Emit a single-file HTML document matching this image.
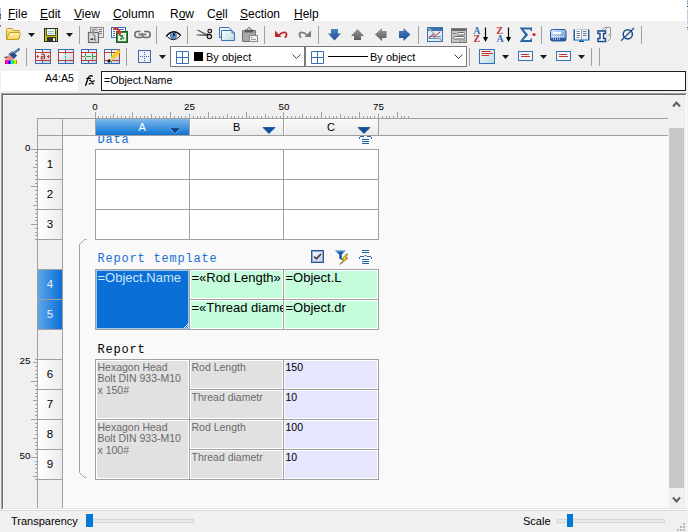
<!DOCTYPE html>
<html><head><meta charset="utf-8"><style>
*{margin:0;padding:0;box-sizing:border-box}
html,body{width:688px;height:532px;overflow:hidden;background:#f0f0f0;font-family:"Liberation Sans",sans-serif;color:#000}
.t{position:absolute;white-space:nowrap;line-height:1}
.ic{position:absolute;overflow:visible}
svg{display:block}
.u{text-decoration:underline;text-underline-offset:2px}
</style></head><body>
<div style="position:absolute;left:0px;top:0px;width:688px;height:21px;background:#fff"></div>
<div class="t" style="left:8px;top:8px;font-size:12px;"><span style="text-decoration:underline;text-underline-offset:1px;text-decoration-thickness:1px">F</span>ile</div>
<div class="t" style="left:40px;top:8px;font-size:12px;"><span style="text-decoration:underline;text-underline-offset:1px;text-decoration-thickness:1px">E</span>dit</div>
<div class="t" style="left:74px;top:8px;font-size:12px;"><span style="text-decoration:underline;text-underline-offset:1px;text-decoration-thickness:1px">V</span>iew</div>
<div class="t" style="left:113px;top:8px;font-size:12px;"><span style="text-decoration:underline;text-underline-offset:1px;text-decoration-thickness:1px">C</span>olumn</div>
<div class="t" style="left:170px;top:8px;font-size:12px;">R<span style="text-decoration:underline;text-underline-offset:1px;text-decoration-thickness:1px">o</span>w</div>
<div class="t" style="left:207px;top:8px;font-size:12px;">C<span style="text-decoration:underline;text-underline-offset:1px;text-decoration-thickness:1px">e</span>ll</div>
<div class="t" style="left:240px;top:8px;font-size:12px;"><span style="text-decoration:underline;text-underline-offset:1px;text-decoration-thickness:1px">S</span>ection</div>
<div class="t" style="left:294px;top:8px;font-size:12px;"><span style="text-decoration:underline;text-underline-offset:1px;text-decoration-thickness:1px">H</span>elp</div>
<svg width="0" height="0" style="position:absolute"><defs>
<linearGradient id="gFold" x1="0" y1="0" x2="0" y2="1"><stop offset="0" stop-color="#fff8c0"/><stop offset="1" stop-color="#f5cf50"/></linearGradient>
<linearGradient id="gPage" x1="0" y1="0" x2="1" y2="1"><stop offset="0" stop-color="#ffffff"/><stop offset="1" stop-color="#b8d8e0"/></linearGradient>
<linearGradient id="gBlue" x1="0" y1="0" x2="0" y2="1"><stop offset="0" stop-color="#4f80c0"/><stop offset="1" stop-color="#1c4c90"/></linearGradient>
<linearGradient id="gGray" x1="0" y1="0" x2="0" y2="1"><stop offset="0" stop-color="#9a9a9a"/><stop offset="1" stop-color="#5a5a5a"/></linearGradient>
<linearGradient id="gCalc" x1="0" y1="0" x2="1" y2="1"><stop offset="0" stop-color="#d8f0ff"/><stop offset="1" stop-color="#5a8ac8"/></linearGradient>
<linearGradient id="gRain" x1="0" y1="0" x2="1" y2="0"><stop offset="0" stop-color="#ff0000"/><stop offset=".2" stop-color="#ff00ff"/><stop offset=".4" stop-color="#0000ff"/><stop offset=".55" stop-color="#00ffff"/><stop offset=".7" stop-color="#00ff00"/><stop offset=".85" stop-color="#ffff00"/><stop offset="1" stop-color="#ff3000"/></linearGradient>
</defs></svg>
<svg class="ic" style="left:5px;top:27px" width="17" height="14" viewBox="0 0 17 14"><path d="M1.5 11.5V2.5Q1.5 1.5 2.5 1.5H7L8.5 3.5H13.5Q14.5 3.5 14.5 4.5V11.5Z" fill="#f6da70" stroke="#c49a28"/><path d="M2 3H7" stroke="#fff4c0"/><path d="M1.5 12.5H13.5L15.5 6.5Q15.8 5.5 14.5 5.5H5Q4.2 5.5 4 6.5L1.5 12.5Z" fill="url(#gFold)" stroke="#c39a2a"/></svg>
<svg class="ic" style="left:28px;top:33px" width="7" height="4" viewBox="0 0 7 4"><path d="M0 0H7L3.5 4Z" fill="#1a1a1a"/></svg>
<svg class="ic" style="left:44px;top:28px" width="14" height="14" viewBox="0 0 14 14"><rect x="0.5" y="0.5" width="13" height="13" fill="#c4c400" stroke="#2a2a2a"/><rect x="3" y="1" width="8" height="6" fill="#eef6f8"/><path d="M2.5 1V7.5H11.5V1" fill="none" stroke="#3a3a3a" stroke-width="0.8"/><path d="M4 3.5H10M4 5.5H10" stroke="#a0c4cc"/><rect x="3" y="9" width="9" height="4.5" fill="#333"/><rect x="9" y="10" width="2" height="3" fill="#dff0f8"/><rect x="12" y="1" width="1" height="1" fill="#fff"/></svg>
<svg class="ic" style="left:66px;top:33px" width="7" height="4" viewBox="0 0 7 4"><path d="M0 0H7L3.5 4Z" fill="#1a1a1a"/></svg>
<div style="position:absolute;left:79px;top:26px;width:1px;height:18px;background:#a0a0a0"></div>
<svg class="ic" style="left:88px;top:27px" width="17" height="16" viewBox="0 0 17 16"><rect x="2.5" y="0.5" width="13" height="10" fill="#e6e6e6" stroke="#8a8a8a"/><path d="M11 2.5H14M11 4.5H14M11 6.5H14M4 2.5H6" stroke="#7a7a7a"/><rect x="0.5" y="5.5" width="10" height="10" fill="#dcdcdc" stroke="#6a6a6a" stroke-width="1.2"/><path d="M9.5 3Q6 1.5 5 4Q4 6.5 6.5 8.5Q8 10 5.5 12" fill="none" stroke="#9a9a9a" stroke-width="1.8"/><path d="M2.5 12.5L5 12M6.5 13L7.5 12.5" stroke="#2a2a2a" stroke-width="1.6"/></svg>
<svg class="ic" style="left:111px;top:27px" width="17" height="16" viewBox="0 0 17 16"><rect x="0.5" y="0.5" width="14" height="10" fill="#fff" stroke="#3a6ab8"/><path d="M2 2.5H13M2 4.5H4M2 6.5H4M2 8.5H4" stroke="#3a6ab8"/><rect x="5.5" y="4.5" width="11" height="11" fill="#3a8a3a" stroke="#1f5f1f"/><rect x="7" y="6" width="8" height="8" fill="#e8f4e4"/><path d="M8.5 7.5L13 12M9 12H11M12 8L10.5 9.5" stroke="#2a7a2a" stroke-width="1.5"/><path d="M2.5 2Q6 0 8.5 4.5" fill="none" stroke="#d03838" stroke-width="2.2"/><path d="M5.5 4.5L8.5 9L11.5 4Z" fill="#d03838"/></svg>
<svg class="ic" style="left:134px;top:30px" width="17" height="9" viewBox="0 0 17 9"><path d="M6.5 1.5H3.5Q0.8 1.5 0.8 4.5Q0.8 7.5 3.5 7.5H6.5Q8.5 7.5 9 6M10 1.5H13.5Q16.2 1.5 16.2 4.5Q16.2 7.5 13.5 7.5H10.5Q8.5 7.5 8 3" fill="none" stroke="#6a6a6a" stroke-width="1.6"/><path d="M4.5 4.5H12.5" stroke="#7a7a7a" stroke-width="2"/></svg>
<div style="position:absolute;left:156px;top:26px;width:1px;height:18px;background:#a0a0a0"></div>
<svg class="ic" style="left:166px;top:30px" width="16" height="11" viewBox="0 0 16 11"><clipPath id="eyeClip"><path d="M0.2 6.4Q7.5 -2.3 14.7 5.4Q7.5 13.1 0.2 6.4Z"/></clipPath><path d="M0.2 6.4Q7.5 -2.3 14.7 5.4Q7.5 13.1 0.2 6.4Z" fill="#fff"/><g clip-path="url(#eyeClip)"><circle cx="7.4" cy="5.4" r="3.6" fill="#5a8acc"/><circle cx="7.6" cy="4.6" r="1.3" fill="#111"/><circle cx="6.3" cy="4.1" r="0.7" fill="#fff"/></g><path d="M0.2 6.4Q7.5 -2.3 14.7 5.4" fill="none" stroke="#111" stroke-width="1.5"/><path d="M1.5 6.8Q7.5 13.1 14.2 5.8" fill="none" stroke="#111" stroke-width="1"/></svg>
<div style="position:absolute;left:187px;top:26px;width:1px;height:18px;background:#a0a0a0"></div>
<svg class="ic" style="left:196px;top:28px" width="17" height="12" viewBox="0 0 17 12"><path d="M1.5 2L11 6.8" stroke="#555" stroke-width="1.3"/><path d="M0 6.6L11 6.2L11 8L1 7.4Z" fill="#555"/><path d="M11.5 5.5Q11.5 7.5 13 8" fill="none" stroke="#111" stroke-width="1.3"/><circle cx="13.8" cy="3.1" r="1.9" fill="#c8c8c8" stroke="#111" stroke-width="1.1"/><circle cx="13.4" cy="8.6" r="2.2" fill="#c8c8c8" stroke="#111" stroke-width="1.1"/></svg>
<svg class="ic" style="left:218px;top:27px" width="18" height="15" viewBox="0 0 18 15"><path d="M1.5 0.5H11L13 2.5V10.5H1.5Z" fill="url(#gPage)" stroke="#3a70b8"/><path d="M3.5 3.5H14L16.5 6V13.5H3.5Z" fill="url(#gPage)" stroke="#3a70b8"/><path d="M14 3.5V6H16.5" fill="none" stroke="#3a70b8"/></svg>
<svg class="ic" style="left:242px;top:27px" width="17" height="16" viewBox="0 0 17 16"><rect x="0.5" y="3.5" width="13" height="11" rx="0.5" fill="#a8a8a8" stroke="#707070"/><path d="M3 2.5H11L11.5 5.5H2.5Z" fill="#5a5a5a"/><path d="M5.5 2.5Q5.5 0.5 7 0.5Q8.5 0.5 8.5 2.5" fill="#eee" stroke="#707070"/><rect x="7.5" y="8.5" width="8" height="6" fill="#f2f2f2" stroke="#8a8a8a"/><path d="M9 10.5H11M9 12.5H14" stroke="#9a9a9a"/></svg>
<div style="position:absolute;left:264px;top:26px;width:1px;height:18px;background:#a0a0a0"></div>
<svg class="ic" style="left:275px;top:30px" width="13" height="9" viewBox="0 0 13 9"><path d="M3.5 5.5Q7 1.5 10.5 2.5Q12.8 4 10 7.8" fill="none" stroke="#c0282c" stroke-width="1.8"/><path d="M0 0.5V7H6.5Z" fill="#c0282c"/></svg>
<svg class="ic" style="left:298px;top:30px" width="13" height="9" viewBox="0 0 13 9"><path d="M9.5 5.5Q6 1.5 2.5 2.5Q0.2 4 3 7.8" fill="none" stroke="#7a7a7a" stroke-width="1.8"/><path d="M13 0.5V7H6.5Z" fill="#7a7a7a"/></svg>
<div style="position:absolute;left:318px;top:26px;width:1px;height:18px;background:#a0a0a0"></div>
<svg class="ic" style="left:328px;top:29px" width="13" height="12" viewBox="0 0 13 12"><path d="M3 0H10V4.5H13L6.5 11.5L0 4.5H3Z" fill="url(#gBlue)"/></svg>
<svg class="ic" style="left:351px;top:29px" width="13" height="12" viewBox="0 0 13 12"><path d="M6.5 0L13 7H10V11H3V7H0Z" fill="url(#gGray)"/></svg>
<svg class="ic" style="left:375px;top:28px" width="12" height="13" viewBox="0 0 12 13"><path d="M0 6.5L7 0V3H11.5V10H7V13Z" fill="url(#gGray)"/></svg>
<svg class="ic" style="left:399px;top:28px" width="12" height="13" viewBox="0 0 12 13"><path d="M11.5 6.5L4.5 0V3H0V10H4.5V13Z" fill="url(#gBlue)"/></svg>
<div style="position:absolute;left:418px;top:26px;width:1px;height:18px;background:#a0a0a0"></div>
<svg class="ic" style="left:427px;top:27px" width="16" height="15" viewBox="0 0 16 15"><rect x="0.5" y="0.5" width="15" height="14" fill="#dff0f8" stroke="#3a70b0"/><rect x="1" y="1" width="14" height="3" fill="#3a70b0"/><rect x="3" y="2" width="1" height="1" fill="#fff"/><path d="M2 11.5H14M2 9.5H14" stroke="#3a70b0" stroke-width="0.8"/><path d="M2 11L6.5 6.5L7.5 10L13.5 4.5" fill="none" stroke="#d03030" stroke-width="1.2" stroke-dasharray="1.5 0.5"/><path d="M1 1L15 14" stroke="#b0b0b0" stroke-width="1.2"/></svg>
<svg class="ic" style="left:451px;top:28px" width="16" height="16" viewBox="0 0 16 16"><rect x="0.5" y="0.5" width="15" height="14" fill="#c8c8c8" stroke="#7a7a7a"/><rect x="1" y="1" width="14" height="2" fill="#6a6a6a"/><rect x="6.5" y="4.5" width="7" height="2.5" rx="1" fill="#f8f8f8" stroke="#6a6a6a"/><rect x="2.5" y="8.5" width="11" height="2.5" rx="1" fill="#f8f8f8" stroke="#6a6a6a"/><path d="M2 5.5H5" stroke="#7a7a7a"/><path d="M8 13H10M11.5 13H14" stroke="#8a8a8a"/></svg>
<svg class="ic" style="left:473px;top:27px" width="16" height="16" viewBox="0 0 16 16"><text x="0.2" y="7" font-family="Liberation Serif" font-weight="bold" font-size="10" fill="#3a70b8">A</text><text x="0.5" y="15" font-family="Liberation Serif" font-weight="bold" font-size="10" fill="#c03030">Z</text><path d="M12.5 0.5V13" stroke="#000" stroke-width="1.2"/><path d="M10 10H15L12.5 15Z" fill="#000"/></svg>
<svg class="ic" style="left:496px;top:27px" width="16" height="16" viewBox="0 0 16 16"><text x="0.2" y="7" font-family="Liberation Serif" font-weight="bold" font-size="10" fill="#c03030">Z</text><text x="0.5" y="15" font-family="Liberation Serif" font-weight="bold" font-size="10" fill="#3a70b8">A</text><path d="M12.5 0.5V13" stroke="#000" stroke-width="1.2"/><path d="M10 10H15L12.5 15Z" fill="#000"/></svg>
<svg class="ic" style="left:519px;top:27px" width="17" height="16" viewBox="0 0 17 16"><path d="M0.5 0.5H13V4H11.5V2.5H4.5L9.2 7.8L4.5 13H11.5V11.5H13V15H0.5L6 7.8Z" fill="#2a66a8"/><circle cx="15" cy="7.5" r="1.6" fill="#d02828"/></svg>
<div style="position:absolute;left:541px;top:26px;width:1px;height:18px;background:#a0a0a0"></div>
<svg class="ic" style="left:550px;top:29px" width="17" height="13" viewBox="0 0 17 13"><rect x="0.5" y="0.5" width="15.5" height="11.5" rx="2" fill="url(#gCalc)" stroke="#2a5aa0"/><rect x="0.8" y="9" width="15" height="3" fill="#2a5aa0"/><rect x="3" y="3" width="8" height="2" fill="#fff"/><path d="M3 7.5H14M3 10H10" stroke="#fff" stroke-dasharray="1 1"/></svg>
<svg class="ic" style="left:573px;top:28px" width="17" height="15" viewBox="0 0 17 15"><path d="M0.5 1.5H7.5L8.5 2.5L9.5 1.5H16.5V12.5H0.5Z" fill="#2a5aa0"/><path d="M2 1.5H7.5Q8 2 8.3 3V11.5H2Z" fill="#fff"/><path d="M10 1.5H15V11.5H8.7V3Q9 2 10 1.5Z" fill="#e6f4f8"/><path d="M3.5 3.5H6.5M3.5 5.5H7M3.5 7.5H7M3.5 9.5H6.5M10 3.5H13.5M10 5.5H13.5M10 7.5H13.5" stroke="#7a7a7a"/><rect x="6" y="12" width="5" height="2" fill="#1a4a90"/><path d="M2 12.5H15" stroke="#4ab0f0" stroke-dasharray="1 1"/></svg>
<svg class="ic" style="left:597px;top:27px" width="14" height="16" viewBox="0 0 14 16"><path d="M4.5 3.5L7.5 0.5H13.5V11.5L10.5 14.5" fill="none" stroke="#9a9a9a"/><path d="M7.5 3.5L10.5 0.5M13.5 6.5L10.5 9.5" stroke="#9a9a9a"/><path d="M1 4H8.5V6.5H6.5V11.5H8.5V14.5H1V11.5H3V6.5H1Z" fill="#fff" stroke="#1a4a8a" stroke-width="1.5"/></svg>
<svg class="ic" style="left:620px;top:27px" width="15" height="15" viewBox="0 0 15 15"><circle cx="7.8" cy="7.3" r="4.6" fill="none" stroke="#1a4a8a" stroke-width="1.5"/><path d="M1 13.8L14 1" stroke="#1a4a8a" stroke-width="1.2"/></svg>
<div style="position:absolute;left:641px;top:26px;width:1px;height:18px;background:#a0a0a0"></div>
<svg class="ic" style="left:4px;top:48px" width="17" height="17" viewBox="0 0 17 17"><rect x="1" y="12" width="12" height="4" fill="url(#gRain)"/><path d="M0.5 9.5L3.5 8.5L5 7L10 10.5L9 12.5L3 12.5Z" fill="#f08888"/><path d="M0.5 9.5L3.5 8.8" stroke="#333" stroke-width="1"/><path d="M4.5 6L8.5 3L13 7.5L10 11Z" fill="#2a4e82"/><path d="M6 5.5L9 3.8" stroke="#7ab0e8" stroke-width="1.2"/><path d="M10.5 4.5L15.5 0.8" stroke="#4a6a90" stroke-width="2.4"/><path d="M11 3L14 1" stroke="#a8c8e8" stroke-width="0.8"/></svg>
<div style="position:absolute;left:26px;top:48px;width:1px;height:18px;background:#a0a0a0"></div>
<svg class="ic" style="left:35px;top:49px" width="16" height="15" viewBox="0 0 16 15"><rect x="0.5" y="0.5" width="15" height="14" fill="url(#gPage)" stroke="#3a6ab8"/><path d="M7.5 0.5V3.5M7.5 11.5V14.5" stroke="#3a6ab8"/><rect x="0.5" y="3.5" width="15" height="8" fill="none" stroke="#c83434"/><path d="M1.5 7.5H4M12 7.5H14.5M2.5 6V9M13.5 6V9" stroke="#c83434"/><path d="M6.2 5.5Q8.5 4.5 9.5 6V10M9.5 7.5Q6 7 6.2 9Q6.5 10.5 9.5 9.5" fill="none" stroke="#c83434" stroke-width="1.3"/></svg>
<svg class="ic" style="left:58px;top:49px" width="16" height="15" viewBox="0 0 16 15"><rect x="0.5" y="0.5" width="15" height="14" fill="url(#gPage)" stroke="#3a6ab8"/><path d="M7.5 0.5V3.5M7.5 11.5V14.5" stroke="#3a6ab8"/><rect x="0.5" y="3.5" width="15" height="8" fill="none" stroke="#c83434"/><path d="M7.5 4V11" stroke="#4a9a4a" stroke-dasharray="2 1"/></svg>
<svg class="ic" style="left:81px;top:49px" width="16" height="15" viewBox="0 0 16 15"><rect x="0.5" y="0.5" width="15" height="14" fill="url(#gPage)" stroke="#3a6ab8"/><path d="M7.5 0.5V3.5M7.5 11.5V14.5" stroke="#3a6ab8"/><rect x="0.5" y="3.5" width="15" height="8" fill="none" stroke="#c83434"/><path d="M1 7.5H4M5 7.5H10M11 7.5H15" stroke="#4a9a4a"/><path d="M4.5 4V7M4.5 8V11M11.5 4V7M11.5 8V11" stroke="#4a9a4a"/></svg>
<svg class="ic" style="left:104px;top:49px" width="16" height="15" viewBox="0 0 16 15"><rect x="0.5" y="0.5" width="15" height="14" fill="url(#gPage)" stroke="#3a6ab8"/><path d="M7.5 0.5V3.5M7.5 11.5V14.5" stroke="#3a6ab8"/><rect x="0.5" y="3.5" width="15" height="8" fill="none" stroke="#c83434"/><path d="M7.5 3.5V14" stroke="#4a9a4a"/><path d="M8 9.5L15.5 1.5" stroke="#f8c818" stroke-width="3.8"/><path d="M6 11.5L8.5 9" stroke="#f0c8a8" stroke-width="3"/><path d="M4 13L6 11" stroke="#111" stroke-width="2.6"/></svg>
<div style="position:absolute;left:126px;top:48px;width:1px;height:18px;background:#a0a0a0"></div>
<svg class="ic" style="left:138px;top:50px" width="13" height="13" viewBox="0 0 13 13"><rect x="0.5" y="0.5" width="12" height="12" fill="none" stroke="#3a6ab8"/><g fill="#3a6ab8"><rect x="6" y="2" width="1" height="1"/><rect x="6" y="4" width="1" height="1"/><rect x="6" y="6" width="1" height="1"/><rect x="6" y="8" width="1" height="1"/><rect x="6" y="10" width="1" height="1"/><rect x="2" y="6" width="1" height="1"/><rect x="4" y="6" width="1" height="1"/><rect x="8" y="6" width="1" height="1"/><rect x="10" y="6" width="1" height="1"/></g></svg>
<svg class="ic" style="left:159px;top:55px" width="7" height="4" viewBox="0 0 7 4"><path d="M0 0H7L3.5 4Z" fill="#1a1a1a"/></svg>
<div style="position:absolute;left:469px;top:48px;width:1px;height:18px;background:#a0a0a0"></div>
<svg class="ic" style="left:479px;top:49px" width="17" height="16" viewBox="0 0 17 16"><rect x="0.5" y="0.5" width="15" height="14" fill="url(#gPage)" stroke="#3a70b8"/><path d="M2.5 2.5H11.5M2.5 4.5H14M2.5 6.5H10" stroke="#d03030"/></svg>
<svg class="ic" style="left:502px;top:55px" width="7" height="4" viewBox="0 0 7 4"><path d="M0 0H7L3.5 4Z" fill="#1a1a1a"/></svg>
<svg class="ic" style="left:518px;top:51px" width="15" height="10" viewBox="0 0 15 10"><rect x="0.5" y="0.5" width="14" height="9" fill="#eef6fa" stroke="#3a70b8"/><path d="M3 3.5H11M3 5.5H12" stroke="#d03030"/></svg>
<svg class="ic" style="left:540px;top:55px" width="7" height="4" viewBox="0 0 7 4"><path d="M0 0H7L3.5 4Z" fill="#1a1a1a"/></svg>
<svg class="ic" style="left:556px;top:51px" width="15" height="10" viewBox="0 0 15 10"><rect x="0.5" y="0.5" width="14" height="9" fill="#eef6fa" stroke="#3a70b8"/><path d="M3 3.5H11M3 5.5H12" stroke="#d03030"/></svg>
<svg class="ic" style="left:578px;top:55px" width="7" height="4" viewBox="0 0 7 4"><path d="M0 0H7L3.5 4Z" fill="#1a1a1a"/></svg>
<div style="position:absolute;left:591px;top:48px;width:1px;height:18px;background:#a0a0a0"></div>
<div style="position:absolute;left:599px;top:48px;width:1px;height:18px;background:#a0a0a0"></div>
<div style="position:absolute;left:170px;top:46px;width:135px;height:21px;background:#fff;border:1px solid #7a7a7a"></div>
<div style="position:absolute;left:305px;top:46px;width:162px;height:21px;background:#fff;border:1px solid #7a7a7a"></div>
<svg class="ic" style="left:176px;top:51px" width="13" height="13"><path d="M0.5 0.5H12.5V12.5H0.5ZM6.5 0.5V12.5M0.5 6.5H12.5" fill="none" stroke="#3a70b8"/></svg>
<svg class="ic" style="left:311px;top:51px" width="13" height="13"><path d="M0.5 0.5H12.5V12.5H0.5ZM6.5 0.5V12.5M0.5 6.5H12.5" fill="none" stroke="#3a70b8"/></svg>
<div style="position:absolute;left:194px;top:52px;width:9px;height:9px;background:#000"></div>
<div class="t" style="left:206px;top:52px;font-size:11px">By object</div>
<div style="position:absolute;left:328px;top:56px;width:40px;height:1px;background:#000"></div>
<div class="t" style="left:370px;top:52px;font-size:11px">By object</div>
<svg class="ic" style="left:292px;top:54px" width="9" height="6"><path d="M0.5 0.5L4.5 4.5L8.5 0.5" fill="none" stroke="#404040"/></svg>
<svg class="ic" style="left:454px;top:54px" width="9" height="6"><path d="M0.5 0.5L4.5 4.5L8.5 0.5" fill="none" stroke="#404040"/></svg>
<div style="position:absolute;left:1px;top:71px;width:77px;height:20px;background:#fff"></div>
<div class="t" style="left:45px;top:73px;font-size:10.6px">A4:A5</div>
<svg class="ic" style="left:84px;top:74px" width="13" height="13"><path d="M1.5 11.8Q3.3 6.5 4.2 4Q5.2 1.6 7 1.7Q8 1.8 8.6 2.6" fill="none" stroke="#000" stroke-width="1.3"/><path d="M2.2 4.4H7" stroke="#000" stroke-width="1.2"/><path d="M5.3 6.6Q6.5 5.8 7.2 7.2L8.4 9.3Q9 10.2 9.8 9.6M10.6 6.5L5.6 9.8M4.8 9.8H6.2" fill="none" stroke="#000" stroke-width="1.2"/></svg>
<div style="position:absolute;left:101px;top:71px;width:585px;height:20px;background:#fff;border:1px solid #1e1e1e"></div>
<div class="t" style="left:104px;top:75px;font-size:10.67px">=Object.Name</div>
<div style="position:absolute;left:1px;top:93px;width:686px;height:417px;background:#f0f0f0;border-top:1px solid #a0a0a0;border-left:1px solid #a0a0a0;border-right:1px solid #fff;border-bottom:1px solid #fff"></div>
<div style="position:absolute;left:2px;top:94px;width:684px;height:415px;border-top:1px solid #696969;border-left:1px solid #696969;border-right:1px solid #e3e3e3;border-bottom:1px solid #e3e3e3"></div>
<div style="position:absolute;left:3px;top:95px;width:682px;height:413px;border-top:1px solid #f8f8f8;border-left:1px solid #f8f8f8"></div>
<div style="position:absolute;left:63px;top:136px;width:606px;height:372px;background:#f9f9f9"></div>
<div class="t" style="left:97.5px;top:134px;font-family:'Liberation Mono',monospace;font-size:12px;letter-spacing:0.8px;color:#1a6fd6">Data</div>
<div class="t" style="left:97.5px;top:253px;font-family:'Liberation Mono',monospace;font-size:12px;letter-spacing:0.8px;color:#1a6fd6">Report template</div>
<div class="t" style="left:97.5px;top:344px;font-family:'Liberation Mono',monospace;font-size:12px;letter-spacing:0.8px;">Report</div>
<div style="position:absolute;left:95px;top:149px;width:95px;height:31px;border:1px solid #a0a0a0;background:#fff;box-shadow:inset 0 0 0 1px #fff;overflow:hidden"></div>
<div style="position:absolute;left:189px;top:149px;width:95px;height:31px;border:1px solid #a0a0a0;background:#fff;box-shadow:inset 0 0 0 1px #fff;overflow:hidden"></div>
<div style="position:absolute;left:283px;top:149px;width:96px;height:31px;border:1px solid #a0a0a0;background:#fff;box-shadow:inset 0 0 0 1px #fff;overflow:hidden"></div>
<div style="position:absolute;left:95px;top:179px;width:95px;height:31px;border:1px solid #a0a0a0;background:#fff;box-shadow:inset 0 0 0 1px #fff;overflow:hidden"></div>
<div style="position:absolute;left:189px;top:179px;width:95px;height:31px;border:1px solid #a0a0a0;background:#fff;box-shadow:inset 0 0 0 1px #fff;overflow:hidden"></div>
<div style="position:absolute;left:283px;top:179px;width:96px;height:31px;border:1px solid #a0a0a0;background:#fff;box-shadow:inset 0 0 0 1px #fff;overflow:hidden"></div>
<div style="position:absolute;left:95px;top:209px;width:95px;height:31px;border:1px solid #a0a0a0;background:#fff;box-shadow:inset 0 0 0 1px #fff;overflow:hidden"></div>
<div style="position:absolute;left:189px;top:209px;width:95px;height:31px;border:1px solid #a0a0a0;background:#fff;box-shadow:inset 0 0 0 1px #fff;overflow:hidden"></div>
<div style="position:absolute;left:283px;top:209px;width:96px;height:31px;border:1px solid #a0a0a0;background:#fff;box-shadow:inset 0 0 0 1px #fff;overflow:hidden"></div>
<div style="position:absolute;left:95px;top:269px;width:95px;height:61px;border:1px solid #a0a0a0;background:#0a6fd6;box-shadow:inset 0 0 0 1px #9cc6ee;overflow:hidden"><div class="t" style="left:1.5px;top:0px;font-size:13px;line-height:15px;color:#cfe6fb">=Object.Name</div></div>
<div style="position:absolute;left:189px;top:269px;width:95px;height:31px;border:1px solid #a0a0a0;background:#c4fcdc;box-shadow:inset 0 0 0 1px #fff;overflow:hidden"><div class="t" style="left:1.5px;top:0px;font-size:13px;line-height:15px;">=«Rod Length»</div></div>
<div style="position:absolute;left:283px;top:269px;width:96px;height:31px;border:1px solid #a0a0a0;background:#c4fcdc;box-shadow:inset 0 0 0 1px #fff;overflow:hidden"><div class="t" style="left:1.5px;top:0px;font-size:13px;line-height:15px;">=Object.L</div></div>
<div style="position:absolute;left:189px;top:299px;width:95px;height:31px;border:1px solid #a0a0a0;background:#c4fcdc;box-shadow:inset 0 0 0 1px #fff;overflow:hidden"><div class="t" style="left:1.5px;top:0px;font-size:13px;line-height:15px;">=«Thread diameter»</div></div>
<div style="position:absolute;left:283px;top:299px;width:96px;height:31px;border:1px solid #a0a0a0;background:#c4fcdc;box-shadow:inset 0 0 0 1px #fff;overflow:hidden"><div class="t" style="left:1.5px;top:0px;font-size:13px;line-height:15px;">=Object.dr</div></div>
<div style="position:absolute;left:95px;top:359px;width:95px;height:61px;border:1px solid #a0a0a0;background:#e1e1e1;box-shadow:inset 0 0 0 1px #fff;overflow:hidden"><div class="t" style="left:1.5px;top:0px;font-size:10.5px;line-height:11.6px;color:#6a6a6a;margin-top:1.75px;">Hexagon Head<br>Bolt DIN 933-M10<br>x 150#</div></div>
<div style="position:absolute;left:189px;top:359px;width:95px;height:31px;border:1px solid #a0a0a0;background:#e1e1e1;box-shadow:inset 0 0 0 1px #fff;overflow:hidden"><div class="t" style="left:1.5px;top:0px;font-size:10.5px;line-height:11.6px;color:#6a6a6a;margin-top:1.75px;">Rod Length</div></div>
<div style="position:absolute;left:189px;top:389px;width:95px;height:31px;border:1px solid #a0a0a0;background:#e1e1e1;box-shadow:inset 0 0 0 1px #fff;overflow:hidden"><div class="t" style="left:1.5px;top:0px;font-size:10.5px;line-height:11.6px;color:#6a6a6a;margin-top:1.75px;">Thread diametr</div></div>
<div style="position:absolute;left:283px;top:359px;width:96px;height:31px;border:1px solid #a0a0a0;background:#e6e6fc;box-shadow:inset 0 0 0 1px #fff;overflow:hidden"><div class="t" style="left:1.5px;top:0px;font-size:10.5px;line-height:11.6px;color:#6a6a6a;margin-top:1.75px;color:#000">150</div></div>
<div style="position:absolute;left:283px;top:389px;width:96px;height:31px;border:1px solid #a0a0a0;background:#e6e6fc;box-shadow:inset 0 0 0 1px #fff;overflow:hidden"><div class="t" style="left:1.5px;top:0px;font-size:10.5px;line-height:11.6px;color:#6a6a6a;margin-top:1.75px;color:#000">10</div></div>
<div style="position:absolute;left:95px;top:419px;width:95px;height:61px;border:1px solid #a0a0a0;background:#e1e1e1;box-shadow:inset 0 0 0 1px #fff;overflow:hidden"><div class="t" style="left:1.5px;top:0px;font-size:10.5px;line-height:11.6px;color:#6a6a6a;margin-top:1.75px;">Hexagon Head<br>Bolt DIN 933-M10<br>x 100#</div></div>
<div style="position:absolute;left:189px;top:419px;width:95px;height:31px;border:1px solid #a0a0a0;background:#e1e1e1;box-shadow:inset 0 0 0 1px #fff;overflow:hidden"><div class="t" style="left:1.5px;top:0px;font-size:10.5px;line-height:11.6px;color:#6a6a6a;margin-top:1.75px;">Rod Length</div></div>
<div style="position:absolute;left:189px;top:449px;width:95px;height:31px;border:1px solid #a0a0a0;background:#e1e1e1;box-shadow:inset 0 0 0 1px #fff;overflow:hidden"><div class="t" style="left:1.5px;top:0px;font-size:10.5px;line-height:11.6px;color:#6a6a6a;margin-top:1.75px;">Thread diametr</div></div>
<div style="position:absolute;left:283px;top:419px;width:96px;height:31px;border:1px solid #a0a0a0;background:#e6e6fc;box-shadow:inset 0 0 0 1px #fff;overflow:hidden"><div class="t" style="left:1.5px;top:0px;font-size:10.5px;line-height:11.6px;color:#6a6a6a;margin-top:1.75px;color:#000">100</div></div>
<div style="position:absolute;left:283px;top:449px;width:96px;height:31px;border:1px solid #a0a0a0;background:#e6e6fc;box-shadow:inset 0 0 0 1px #fff;overflow:hidden"><div class="t" style="left:1.5px;top:0px;font-size:10.5px;line-height:11.6px;color:#6a6a6a;margin-top:1.75px;color:#000">10</div></div>
<svg class="ic" style="left:184px;top:323px" width="5" height="5" shape-rendering="crispEdges"><g fill="#e8f4ff"><rect x="4" y="0" width="1" height="1"/><rect x="3" y="1" width="1" height="1"/><rect x="2" y="2" width="1" height="1"/><rect x="4" y="2" width="1" height="1"/><rect x="1" y="3" width="1" height="1"/><rect x="3" y="3" width="1" height="1"/><rect x="0" y="4" width="1" height="1"/><rect x="2" y="4" width="1" height="1"/><rect x="4" y="4" width="1" height="1"/></g></svg>
<svg class="ic" style="left:359px;top:136px" width="14" height="9"><path d="M1 0.5H5M8 0.5H12M0.5 1V3M12.5 1V3" fill="none" stroke="#2a64a8"/><path d="M3 3.5H10M3 5.5H10M3 7.5H10" stroke="#2a64a8"/></svg>
<svg class="ic" style="left:311px;top:250px" width="13" height="13"><defs><linearGradient id="gChk" x1="0" y1="0" x2="1" y2="1"><stop offset="0" stop-color="#ffffff"/><stop offset="1" stop-color="#c4c4f0"/></linearGradient></defs><rect x="0.5" y="0.5" width="12" height="12" fill="url(#gChk)" stroke="#2c5a94"/><rect x="1.5" y="1.5" width="10" height="10" fill="none" stroke="#8aa8d0"/><path d="M3 6.5L5.3 8.8L10 4" fill="none" stroke="#3a3a3a" stroke-width="1.6"/></svg>
<svg class="ic" style="left:335px;top:250px" width="14" height="16"><path d="M0 0.5H10.5L6.8 4.5V10L4.2 8.5V4.5Z" fill="#1a5aa8"/><path d="M1 1H9.5" stroke="#8ac0f0" stroke-width="1"/><path d="M11.5 4L6.5 9.5H9L5 14.5L13 8H10.5L12.8 4Z" fill="#f8d020" stroke="#6a6a10" stroke-width="0.7"/></svg>
<svg class="ic" style="left:359px;top:250px" width="13" height="14"><path d="M3 0.5H10M3 2.5H10M3 9.5H10M3 11.5H10M3 13.5H10" stroke="#2a64a8"/><path d="M1 6.5H5L6.5 5L8 6.5H12M0.5 7V9M12.5 7V9" fill="none" stroke="#2a64a8"/></svg>
<svg class="ic" style="left:78px;top:238px" width="12" height="242"><path d="M8.5 1.5 H6.5 L1.5 6.5 V234.5 L6.5 239.5 H8.5" fill="none" stroke="#a0a0a0"/></svg>
<div style="position:absolute;left:37px;top:118px;width:631px;height:1px;background:#a0a0a0"></div>
<div style="position:absolute;left:37px;top:135px;width:631px;height:1px;background:#a0a0a0"></div>
<div style="position:absolute;left:37px;top:118px;width:1px;height:390px;background:#a0a0a0"></div>
<div style="position:absolute;left:62px;top:118px;width:1px;height:390px;background:#a0a0a0"></div>
<div style="position:absolute;left:96px;top:119px;width:93px;height:16px;background:linear-gradient(#7db9ec,#0d73d3)"></div>
<div style="position:absolute;left:190px;top:119px;width:93px;height:16px;background:linear-gradient(#fafafa,#ebebeb);box-shadow:inset 1px 1px 0 #fff"></div>
<div style="position:absolute;left:284px;top:119px;width:94px;height:16px;background:linear-gradient(#fafafa,#ebebeb);box-shadow:inset 1px 1px 0 #fff"></div>
<div style="position:absolute;left:95px;top:112px;width:1px;height:24px;background:#a0a0a0"></div>
<div style="position:absolute;left:283px;top:112px;width:1px;height:24px;background:#a0a0a0"></div>
<div style="position:absolute;left:189px;top:114px;width:1px;height:22px;background:#a0a0a0"></div>
<div style="position:absolute;left:378px;top:114px;width:1px;height:22px;background:#a0a0a0"></div>
<div class="t" style="left:138.5px;top:122px;font-size:11px;color:#fff">A</div>
<div class="t" style="left:233px;top:122px;font-size:11px">B</div>
<div class="t" style="left:327px;top:122px;font-size:11px">C</div>
<svg class="ic" style="left:169px;top:127px" width="13" height="8"><defs><linearGradient id="gTri" x1="0" y1="0" x2="0" y2="1"><stop offset="0" stop-color="#0d5098"/><stop offset="1" stop-color="#002c70"/></linearGradient></defs><path d="M0.5 1H11.5L6 6.8Z" fill="url(#gTri)"/><path d="M0.3 0.8L6 6.8L11.7 0.8" fill="none" stroke="#d8ecff" stroke-width="0.9" stroke-dasharray="1 0.6"/></svg>
<svg class="ic" style="left:263px;top:127px" width="12" height="7"><path d="M0 0.5H12L6 6.5Z" fill="#0f4e98" stroke="#0f4e98" stroke-width="0.8"/></svg>
<svg class="ic" style="left:358px;top:127px" width="12" height="7"><path d="M0 0.5H12L6 6.5Z" fill="#0f4e98" stroke="#0f4e98" stroke-width="0.8"/></svg>
<svg class="ic" style="left:0;top:0" width="688" height="532" shape-rendering="crispEdges"><g fill="#a0a0a0"><rect x="95" y="112" width="1" height="6"/><rect x="98" y="116" width="1" height="2"/><rect x="102" y="116" width="1" height="2"/><rect x="106" y="116" width="1" height="2"/><rect x="110" y="116" width="1" height="2"/><rect x="113" y="114" width="1" height="4"/><rect x="117" y="116" width="1" height="2"/><rect x="121" y="116" width="1" height="2"/><rect x="125" y="116" width="1" height="2"/><rect x="129" y="116" width="1" height="2"/><rect x="132" y="112" width="1" height="6"/><rect x="136" y="116" width="1" height="2"/><rect x="140" y="116" width="1" height="2"/><rect x="144" y="116" width="1" height="2"/><rect x="147" y="116" width="1" height="2"/><rect x="151" y="114" width="1" height="4"/><rect x="155" y="116" width="1" height="2"/><rect x="159" y="116" width="1" height="2"/><rect x="163" y="116" width="1" height="2"/><rect x="166" y="116" width="1" height="2"/><rect x="170" y="112" width="1" height="6"/><rect x="174" y="116" width="1" height="2"/><rect x="178" y="116" width="1" height="2"/><rect x="181" y="116" width="1" height="2"/><rect x="185" y="116" width="1" height="2"/><rect x="189" y="114" width="1" height="4"/><rect x="193" y="116" width="1" height="2"/><rect x="197" y="116" width="1" height="2"/><rect x="200" y="116" width="1" height="2"/><rect x="204" y="116" width="1" height="2"/><rect x="208" y="112" width="1" height="6"/><rect x="212" y="116" width="1" height="2"/><rect x="215" y="116" width="1" height="2"/><rect x="219" y="116" width="1" height="2"/><rect x="223" y="116" width="1" height="2"/><rect x="227" y="114" width="1" height="4"/><rect x="231" y="116" width="1" height="2"/><rect x="234" y="116" width="1" height="2"/><rect x="238" y="116" width="1" height="2"/><rect x="242" y="116" width="1" height="2"/><rect x="246" y="112" width="1" height="6"/><rect x="249" y="116" width="1" height="2"/><rect x="253" y="116" width="1" height="2"/><rect x="257" y="116" width="1" height="2"/><rect x="261" y="116" width="1" height="2"/><rect x="265" y="114" width="1" height="4"/><rect x="268" y="116" width="1" height="2"/><rect x="272" y="116" width="1" height="2"/><rect x="276" y="116" width="1" height="2"/><rect x="280" y="116" width="1" height="2"/><rect x="283" y="112" width="1" height="6"/><rect x="287" y="116" width="1" height="2"/><rect x="291" y="116" width="1" height="2"/><rect x="295" y="116" width="1" height="2"/><rect x="299" y="116" width="1" height="2"/><rect x="302" y="114" width="1" height="4"/><rect x="306" y="116" width="1" height="2"/><rect x="310" y="116" width="1" height="2"/><rect x="314" y="116" width="1" height="2"/><rect x="317" y="116" width="1" height="2"/><rect x="321" y="112" width="1" height="6"/><rect x="325" y="116" width="1" height="2"/><rect x="329" y="116" width="1" height="2"/><rect x="333" y="116" width="1" height="2"/><rect x="336" y="116" width="1" height="2"/><rect x="340" y="114" width="1" height="4"/><rect x="344" y="116" width="1" height="2"/><rect x="348" y="116" width="1" height="2"/><rect x="352" y="116" width="1" height="2"/><rect x="355" y="116" width="1" height="2"/><rect x="359" y="112" width="1" height="6"/><rect x="363" y="116" width="1" height="2"/><rect x="367" y="116" width="1" height="2"/><rect x="370" y="116" width="1" height="2"/><rect x="374" y="116" width="1" height="2"/><rect x="378" y="114" width="1" height="4"/><rect x="382" y="116" width="1" height="2"/><rect x="386" y="116" width="1" height="2"/><rect x="389" y="116" width="1" height="2"/><rect x="393" y="116" width="1" height="2"/><rect x="397" y="112" width="1" height="6"/><rect x="401" y="116" width="1" height="2"/><rect x="404" y="116" width="1" height="2"/><rect x="408" y="116" width="1" height="2"/>
<rect x="31" y="149" width="6" height="1"/><rect x="35" y="152" width="2" height="1"/><rect x="35" y="156" width="2" height="1"/><rect x="35" y="160" width="2" height="1"/><rect x="35" y="164" width="2" height="1"/><rect x="33" y="167" width="4" height="1"/><rect x="35" y="171" width="2" height="1"/><rect x="35" y="175" width="2" height="1"/><rect x="35" y="179" width="2" height="1"/><rect x="35" y="183" width="2" height="1"/><rect x="31" y="186" width="6" height="1"/><rect x="35" y="190" width="2" height="1"/><rect x="35" y="194" width="2" height="1"/><rect x="35" y="198" width="2" height="1"/><rect x="35" y="201" width="2" height="1"/><rect x="33" y="205" width="4" height="1"/><rect x="35" y="209" width="2" height="1"/><rect x="35" y="213" width="2" height="1"/><rect x="35" y="217" width="2" height="1"/><rect x="35" y="220" width="2" height="1"/><rect x="31" y="224" width="6" height="1"/><rect x="35" y="228" width="2" height="1"/><rect x="35" y="232" width="2" height="1"/><rect x="35" y="235" width="2" height="1"/><rect x="35" y="239" width="2" height="1"/>
<rect x="35" y="359" width="2" height="1"/><rect x="33" y="362" width="4" height="1"/><rect x="35" y="366" width="2" height="1"/><rect x="35" y="370" width="2" height="1"/><rect x="35" y="374" width="2" height="1"/><rect x="35" y="377" width="2" height="1"/><rect x="31" y="381" width="6" height="1"/><rect x="35" y="385" width="2" height="1"/><rect x="35" y="389" width="2" height="1"/><rect x="35" y="393" width="2" height="1"/><rect x="35" y="396" width="2" height="1"/><rect x="33" y="400" width="4" height="1"/><rect x="35" y="404" width="2" height="1"/><rect x="35" y="408" width="2" height="1"/><rect x="35" y="411" width="2" height="1"/><rect x="35" y="415" width="2" height="1"/><rect x="31" y="419" width="6" height="1"/><rect x="35" y="423" width="2" height="1"/><rect x="35" y="427" width="2" height="1"/><rect x="35" y="430" width="2" height="1"/><rect x="35" y="434" width="2" height="1"/><rect x="33" y="438" width="4" height="1"/><rect x="35" y="442" width="2" height="1"/><rect x="35" y="445" width="2" height="1"/><rect x="35" y="449" width="2" height="1"/><rect x="35" y="453" width="2" height="1"/><rect x="31" y="457" width="6" height="1"/><rect x="35" y="461" width="2" height="1"/><rect x="35" y="464" width="2" height="1"/><rect x="35" y="468" width="2" height="1"/><rect x="35" y="472" width="2" height="1"/><rect x="33" y="476" width="4" height="1"/><rect x="35" y="479" width="2" height="1"/>
</g></svg>
<div class="t" style="left:75px;width:40px;text-align:center;top:101.5px;font-size:9.8px">0</div>
<div class="t" style="left:169.5px;width:40px;text-align:center;top:101.5px;font-size:9.8px">25</div>
<div class="t" style="left:264px;width:40px;text-align:center;top:101.5px;font-size:9.8px">50</div>
<div class="t" style="left:358.5px;width:40px;text-align:center;top:101.5px;font-size:9.8px">75</div>
<div class="t" style="left:0px;width:30.5px;text-align:right;top:142.5px;font-size:9.8px">0</div>
<div class="t" style="left:0px;width:30.5px;text-align:right;top:356.3px;font-size:9.8px">25</div>
<div class="t" style="left:0px;width:30.5px;text-align:right;top:450.5px;font-size:9.8px">50</div>
<div style="position:absolute;left:37px;top:149px;width:26px;height:1px;background:#a0a0a0"></div>
<div style="position:absolute;left:37px;top:179px;width:26px;height:1px;background:#a0a0a0"></div>
<div style="position:absolute;left:38px;top:150px;width:24px;height:29px;background:linear-gradient(to right,#ffffff,#ebebeb)"></div>
<div class="t" style="left:38px;top:159px;width:24px;text-align:center;font-size:11.5px">1</div>
<div style="position:absolute;left:37px;top:179px;width:26px;height:1px;background:#a0a0a0"></div>
<div style="position:absolute;left:37px;top:209px;width:26px;height:1px;background:#a0a0a0"></div>
<div style="position:absolute;left:38px;top:180px;width:24px;height:29px;background:linear-gradient(to right,#ffffff,#ebebeb)"></div>
<div class="t" style="left:38px;top:189px;width:24px;text-align:center;font-size:11.5px">2</div>
<div style="position:absolute;left:37px;top:209px;width:26px;height:1px;background:#a0a0a0"></div>
<div style="position:absolute;left:37px;top:239px;width:26px;height:1px;background:#a0a0a0"></div>
<div style="position:absolute;left:38px;top:210px;width:24px;height:29px;background:linear-gradient(to right,#ffffff,#ebebeb)"></div>
<div class="t" style="left:38px;top:219px;width:24px;text-align:center;font-size:11.5px">3</div>
<div style="position:absolute;left:37px;top:269px;width:26px;height:1px;background:#a0a0a0"></div>
<div style="position:absolute;left:37px;top:299px;width:26px;height:1px;background:#a0a0a0"></div>
<div style="position:absolute;left:38px;top:270px;width:24px;height:29px;background:linear-gradient(to right,#5fa6e8,#0a6fd8)"></div>
<div class="t" style="left:38px;top:279px;width:24px;text-align:center;font-size:11.5px;color:#e8f2fc">4</div>
<div style="position:absolute;left:37px;top:299px;width:26px;height:1px;background:#a0a0a0"></div>
<div style="position:absolute;left:37px;top:329px;width:26px;height:1px;background:#a0a0a0"></div>
<div style="position:absolute;left:38px;top:300px;width:24px;height:29px;background:linear-gradient(to right,#5fa6e8,#0a6fd8)"></div>
<div class="t" style="left:38px;top:309px;width:24px;text-align:center;font-size:11.5px;color:#e8f2fc">5</div>
<div style="position:absolute;left:37px;top:359px;width:26px;height:1px;background:#a0a0a0"></div>
<div style="position:absolute;left:37px;top:389px;width:26px;height:1px;background:#a0a0a0"></div>
<div style="position:absolute;left:38px;top:360px;width:24px;height:29px;background:linear-gradient(to right,#ffffff,#ebebeb)"></div>
<div class="t" style="left:38px;top:369px;width:24px;text-align:center;font-size:11.5px">6</div>
<div style="position:absolute;left:37px;top:389px;width:26px;height:1px;background:#a0a0a0"></div>
<div style="position:absolute;left:37px;top:419px;width:26px;height:1px;background:#a0a0a0"></div>
<div style="position:absolute;left:38px;top:390px;width:24px;height:29px;background:linear-gradient(to right,#ffffff,#ebebeb)"></div>
<div class="t" style="left:38px;top:399px;width:24px;text-align:center;font-size:11.5px">7</div>
<div style="position:absolute;left:37px;top:419px;width:26px;height:1px;background:#a0a0a0"></div>
<div style="position:absolute;left:37px;top:449px;width:26px;height:1px;background:#a0a0a0"></div>
<div style="position:absolute;left:38px;top:420px;width:24px;height:29px;background:linear-gradient(to right,#ffffff,#ebebeb)"></div>
<div class="t" style="left:38px;top:429px;width:24px;text-align:center;font-size:11.5px">8</div>
<div style="position:absolute;left:37px;top:449px;width:26px;height:1px;background:#a0a0a0"></div>
<div style="position:absolute;left:37px;top:479px;width:26px;height:1px;background:#a0a0a0"></div>
<div style="position:absolute;left:38px;top:450px;width:24px;height:29px;background:linear-gradient(to right,#ffffff,#ebebeb)"></div>
<div class="t" style="left:38px;top:459px;width:24px;text-align:center;font-size:11.5px">9</div>
<div style="position:absolute;left:669px;top:95px;width:17px;height:413px;background:#f0f0f0"></div>
<div style="position:absolute;left:669px;top:128px;width:15px;height:360px;background:#c8c8c8"></div>
<svg class="ic" style="left:672px;top:100px" width="10" height="8"><path d="M1 6.5 L4.5 2.5 L8 6.5" fill="none" stroke="#606060" stroke-width="2"/></svg>
<svg class="ic" style="left:672px;top:496px" width="10" height="8"><path d="M1 1.5 L4.5 5.5 L8 1.5" fill="none" stroke="#606060" stroke-width="2"/></svg>
<div style="position:absolute;left:0px;top:510px;width:687px;height:1px;background:#dadada"></div>
<div class="t" style="left:11px;top:516px;font-size:11px">Transparency</div>
<div style="position:absolute;left:92px;top:519px;width:102px;height:4px;background:#e7eaea;border:1px solid #d6d6d6"></div>
<div style="position:absolute;left:86px;top:514px;width:7px;height:13px;background:#0078d7"></div>
<div class="t" style="left:523px;top:516px;font-size:11px">Scale</div>
<div style="position:absolute;left:557px;top:519px;width:108px;height:4px;background:#e7eaea;border:1px solid #d6d6d6"></div>
<div style="position:absolute;left:567px;top:514px;width:6px;height:13px;background:#0078d7"></div>
<svg class="ic" style="left:676px;top:522px" width="10" height="10" shape-rendering="crispEdges"><g fill="#b8b8b8"><rect x="7" y="1" width="2" height="2"/><rect x="4" y="4" width="2" height="2"/><rect x="7" y="4" width="2" height="2"/><rect x="1" y="7" width="2" height="2"/><rect x="4" y="7" width="2" height="2"/><rect x="7" y="7" width="2" height="2"/></g></svg>
<div style="position:absolute;left:687px;top:0px;width:1px;height:5px;background:#94bde6"></div>
<div style="position:absolute;left:687px;top:6px;width:1px;height:1px;background:#222"></div>
<div style="position:absolute;left:687px;top:9px;width:1px;height:16px;background:#b9d0e8"></div>
<div style="position:absolute;left:687px;top:27px;width:1px;height:1px;background:#555"></div>
<div style="position:absolute;left:687px;top:29px;width:1px;height:1px;background:#999"></div>
<div style="position:absolute;left:0px;top:8px;width:1px;height:6px;background:#b4cde6"></div>
<div style="position:absolute;left:0px;top:14px;width:1px;height:1px;background:#333"></div>
<div style="position:absolute;left:0px;top:15px;width:1px;height:1px;background:#3a7ad0"></div>
<div style="position:absolute;left:0px;top:16px;width:1px;height:1px;background:#d8a050"></div>
<div style="position:absolute;left:0px;top:17px;width:1px;height:1px;background:#222"></div>
<div style="position:absolute;left:0px;top:18px;width:1px;height:2px;background:#7ab0e0"></div>
<div style="position:absolute;left:0px;top:25px;width:1px;height:2px;background:#888"></div>
</body></html>
